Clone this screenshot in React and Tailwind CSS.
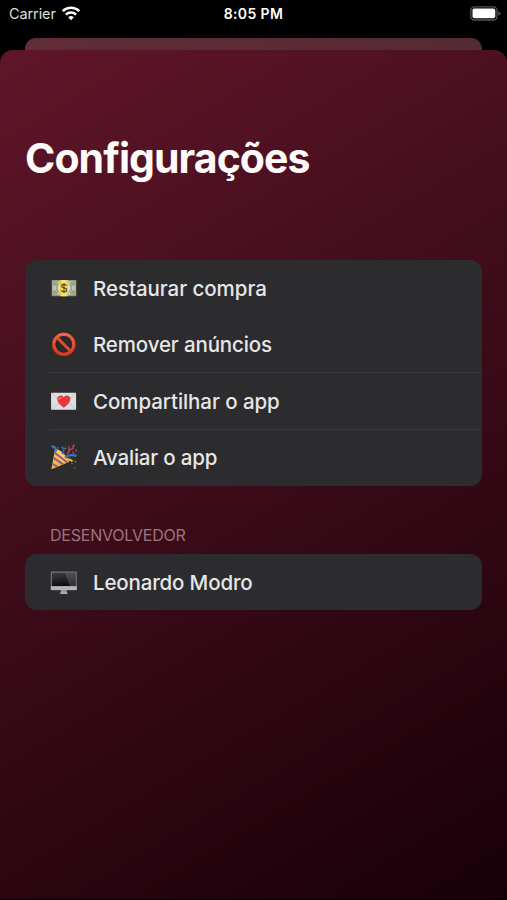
function Wifi() {
  return (
    <svg width="20" height="15" viewBox="0 0 20 15" fill="none" stroke="#fff" strokeWidth="2.5">
      <path d="M1.7 5.2A12 12 0 0 1 18.3 5.2" />
      <path d="M4.9 8.6A7.4 7.4 0 0 1 15.1 8.6" />
      <path d="M10 14.2L7.2 11.3A4 4 0 0 1 12.8 11.3Z" fill="#fff" stroke="none" />
    </svg>
  );
}

function Battery() {
  return (
    <svg width="31" height="15" viewBox="0 0 31 15">
      <rect x="0.8" y="0.8" width="26.2" height="13.2" rx="3.6" fill="none" stroke="#555558" strokeWidth="1.3" />
      <rect x="2.5" y="2.5" width="22.8" height="9.8" rx="2" fill="#fff" />
      <path d="M28.3 5.2Q30.6 6.2 30.6 7.4Q30.6 8.6 28.3 9.6Z" fill="#555558" />
    </svg>
  );
}

function Money() {
  return (
    <svg width="28" height="28" viewBox="0 0 28 28">
      <rect x="1.7" y="6" width="24.6" height="16.2" fill="#8f9580" />
      <rect x="2.6" y="7" width="22.8" height="14" fill="#c5c8b2" />
      <path d="M3 7.4h5A5 5 0 0 1 3 12zM3 20.6h5A5 5 0 0 0 3 16zM25 7.4h-5A5 5 0 0 0 25 12zM25 20.6h-5A5 5 0 0 1 25 16z" fill="#9da28b" />
      <ellipse cx="8.3" cy="14" rx="2.6" ry="4.2" fill="#a3a891" />
      <ellipse cx="19.7" cy="14" rx="2.6" ry="4.2" fill="#a3a891" />
      <ellipse cx="14" cy="14" rx="6.2" ry="6" fill="#dcdec9" />
      <rect x="10" y="6" width="8" height="16.2" fill="#f0c743" />
      <rect x="11.5" y="6" width="5" height="16.2" fill="#fae36e" />
      <path d="M16.5 11.7Q15.8 10.3 14 10.3Q11.7 10.3 11.7 12.1Q11.7 13.4 14 13.9Q16.6 14.4 16.6 16Q16.6 17.8 14 17.8Q12 17.8 11.4 16.3M14 9v10.2" fill="none" stroke="#56501f" strokeWidth="1.2" />
    </svg>
  );
}

function Forbidden() {
  return (
    <svg width="28" height="28" viewBox="0 0 28 28">
      <defs>
        <linearGradient id="ring" x1="0" y1="0" x2="0" y2="1">
          <stop offset="0" stopColor="#f0664a" />
          <stop offset="1" stopColor="#d93420" />
        </linearGradient>
      </defs>
      <circle cx="13.8" cy="14.4" r="11.9" fill="#8f2418" />
      <path fillRule="evenodd" d="M13.8 2.8a11.5 11.5 0 1 0 0 23a11.5 11.5 0 1 0 0-23zM13.8 5.9a8.4 8.4 0 1 1 0 16.8a8.4 8.4 0 1 1 0-16.8z" fill="url(#ring)" />
      <circle cx="13.8" cy="14.3" r="8.3" fill="#29292b" />
      <path d="M7.6 8.1L20 20.5" stroke="#e04a32" strokeWidth="3" />
    </svg>
  );
}

function LoveLetter() {
  return (
    <svg width="28" height="28" viewBox="0 0 28 28">
      <rect x="1.1" y="5.8" width="25" height="17" rx="0.6" fill="#dedfe3" />
      <path d="M1.8 22.5L11 13.5M25.7 22.5L17 13.5M1.8 6.2L12 15.4Q14 17 16 15.4L25.7 6.2" fill="none" stroke="#b9babf" strokeWidth="0.8" />
      <path d="M13.8 20.7C10.3 18.5 7.3 15.4 7.3 12.1C7.3 8.3 12 7.3 13.8 10.5C15.6 7.3 20.3 8.3 20.3 12.1C20.3 15.4 17.3 18.5 13.8 20.7Z" fill="#e5383b" />
      <path d="M9.2 12.4Q9.2 10.4 11 10.3" fill="none" stroke="#f37a74" strokeWidth="1.2" strokeLinecap="round" />
    </svg>
  );
}

function Party() {
  return (
    <svg width="28" height="28" viewBox="0 0 28 28">
      <path d="M1.4 26.3L5 6.6Q8 5.2 13.8 10.8Q19.4 16.3 19 19Z" fill="#f4bd42" />
      <path d="M5 11L6.4 6.5Q12.6 8.6 16.4 16L13.3 20.5Z" fill="#fad06a" />
      <path d="M2.9 20L8.4 23.1L6 24.3L2.4 22.1ZM4 14L14 20.6L11.7 21.7L3.6 16.2ZM5 8.6L18.4 19.2L16.3 20L4.6 10.9Z" fill="#9b5c8c" />
      <path d="M1.6 3.2Q5.6 3.4 6 8.4" fill="none" stroke="#3d74c7" strokeWidth="2.4" />
      <path d="M15 14.7Q20 10.7 26.4 13" fill="none" stroke="#3976c9" strokeWidth="2.4" />
      <path d="M12.2 10.8Q15.2 7.2 11.8 3.5" fill="none" stroke="#2d5ca8" strokeWidth="2.2" />
      <path d="M16.6 11Q20.6 8.7 18.6 5.8Q21 7.5 23.3 5Q22.3 2.8 24.6 1.8" fill="none" stroke="#bc3f4d" strokeWidth="1.7" />
      <path d="M16.5 16.5Q20.5 15.7 22.5 18.4" fill="none" stroke="#edb33c" strokeWidth="2.2" />
      <path d="M18.3 3.2l1.4 1M22.3 9.2l1.8 1.2M25.7 6.4l.8 2" stroke="#a94f5b" strokeWidth="1.4" />
      <path d="M21.2 21.2l1.5-1M24 24.5l1.2.9" stroke="#a84d3c" strokeWidth="1.5" />
      <path d="M14.7 5.6l1.5-.6M24.6 18.2l1.5.8M7.5 4.5l1 .7" stroke="#b58c38" strokeWidth="1.3" />
    </svg>
  );
}

function Desktop() {
  return (
    <svg width="28" height="28" viewBox="0 0 28 28">
      <defs>
        <linearGradient id="screen" x1="0" y1="0" x2="0.2" y2="1">
          <stop offset="0" stopColor="#3f3f41" />
          <stop offset="1" stopColor="#0e0e10" />
        </linearGradient>
      </defs>
      <rect x="0.8" y="3.4" width="26" height="18.9" rx="0.7" fill="#77787a" />
      <rect x="1.9" y="4.6" width="23.8" height="13.6" fill="url(#screen)" />
      <path d="M14.7 4.6H25.7V18.2H20Z" fill="#77777a" opacity="0.38" />
      <rect x="0.8" y="18.2" width="26" height="3.8" fill="#b4b5b7" />
      <rect x="10.8" y="22" width="6" height="3" fill="#96979a" />
      <rect x="10.2" y="24.4" width="7.2" height="1.5" fill="#b8b9bb" />
    </svg>
  );
}

const rows = [
  { icon: Money, label: "Restaurar compra", line: "border-[#2f2f31]", spacing: "tracking-[-0.05px]" },
  { icon: Forbidden, label: "Remover anúncios", line: "border-[#39393b]", spacing: "tracking-[-0.14px]" },
  { icon: LoveLetter, label: "Compartilhar o app", line: "border-[#39393b]", spacing: "tracking-[-0.07px]" },
  { icon: Party, label: "Avaliar o app", line: "border-transparent", spacing: "tracking-[-0.18px]" },
];

function Row({ icon: Icon, label, line, spacing }) {
  return (
    <div className="flex h-[56.5px] pl-[25px]">
      <div className={`flex flex-1 items-center border-b ${line}`}>
        <Icon />
        <span className={`ml-[15px] mt-[2px] whitespace-nowrap text-[20.5px] font-medium leading-6 text-[#e6e6e8] ${spacing}`}>
          {label}
        </span>
      </div>
    </div>
  );
}

export default function App() {
  return (
    <div className="flex h-[900px] w-[507px] flex-col overflow-hidden bg-black font-['Inter','Liberation_Sans',sans-serif]">
      <header className="grid h-[38px] shrink-0 grid-cols-3 items-start pt-[6px] text-white">
        <div className="flex items-start gap-[5px] pl-[9px]">
          <span className="text-[14.5px] leading-4 tracking-[-0.1px] text-[#dedede]">Carrier</span>
          <Wifi />
        </div>
        <span className="text-center text-[14px] font-semibold leading-4 tracking-[0.4px]">8:05 PM</span>
        <div className="flex justify-end pr-[6px]">
          <Battery />
        </div>
      </header>
      <div className="mx-[25px] h-3 shrink-0 rounded-t-[11px] bg-linear-to-r from-[#622c39] to-[#562a34]" />
      <main className="flex h-[849px] shrink-0 flex-col rounded-t-[13px] bg-[linear-gradient(149.2deg,#5f1629_0%,#180008_100%)] px-[25px]">
        <h1 className="mt-[82px] whitespace-nowrap text-[41px] font-bold leading-[52px] tracking-[-0.94px] text-[#fffafa]">
          Configurações
        </h1>
        <section className="mt-[76px] h-[226px] rounded-[12px] bg-[#2c2c2e]">
          {rows.map((row) => (
            <Row key={row.label} {...row} />
          ))}
        </section>
        <h2 className="mt-[39px] pl-[25px] text-[16px] font-normal leading-5 tracking-[-0.22px] text-[#9b747e]">
          DESENVOLVEDOR
        </h2>
        <section className="mt-[9px] h-[56px] rounded-[12px] bg-[#2c2c2e]">
          <Row icon={Desktop} label="Leonardo Modro" line="border-transparent" spacing="tracking-[-0.16px]" />
        </section>
      </main>
    </div>
  );
}
